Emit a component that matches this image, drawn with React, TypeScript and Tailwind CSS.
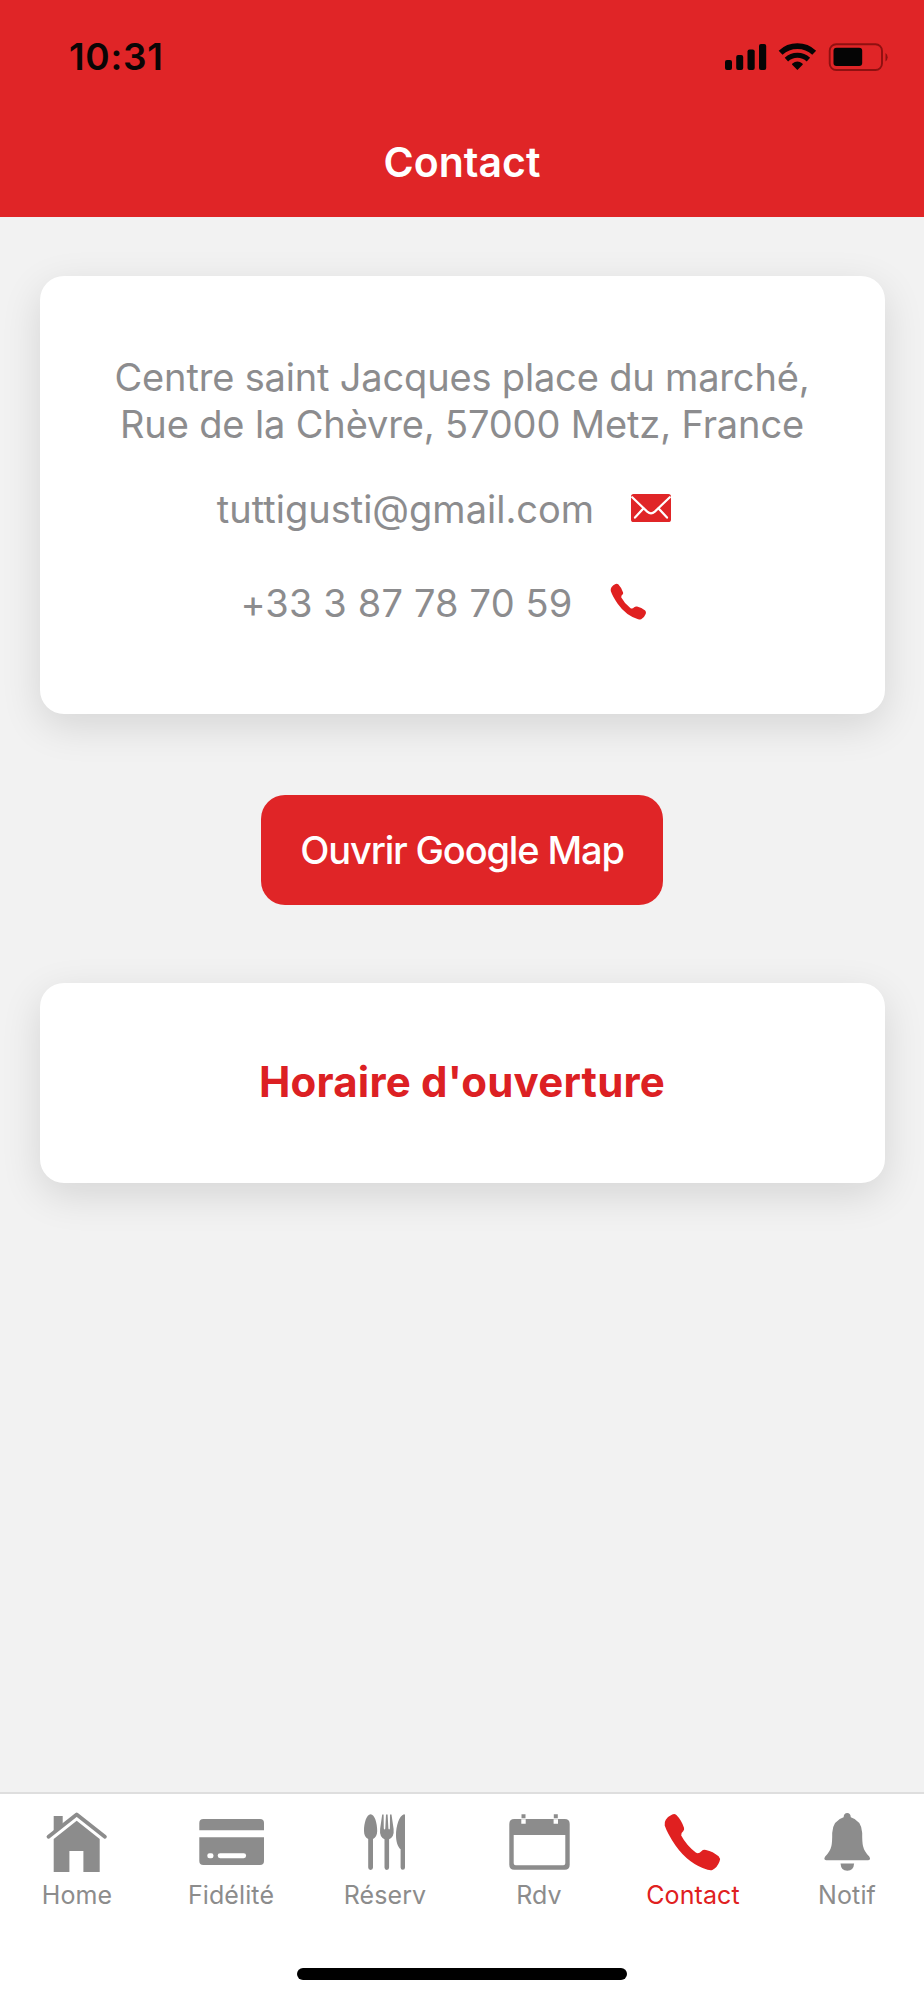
import type { ReactNode } from "react";

function StatusIcons() {
  return (
    <svg className="h-7 w-[164px]" viewBox="0 0 164 28" fill="none">
      <g fill="#050505">
        <rect x="0" y="17" width="7" height="10" rx="2" />
        <rect x="11.2" y="12" width="7" height="15" rx="2" />
        <rect x="22.5" y="6.5" width="7.2" height="20.5" rx="2" />
        <rect x="34" y="1" width="7.2" height="26" rx="2" />
        <path d="M72.4 27 L67.2 21.8 Q66.6 21 67.4 20.4 A8 8 0 0 1 77.4 20.4 Q78.2 21 77.6 21.8 Z" />
        <rect x="108.5" y="4.8" width="28.7" height="18.2" rx="3" />
      </g>
      <path d="M61.4 16.6 A16.2 16.2 0 0 1 83.4 16.6" stroke="#050505" strokeWidth="5" />
      <path d="M55.6 9.8 A24.5 24.5 0 0 1 89.2 9.8" stroke="#050505" strokeWidth="5.6" />
      <rect x="104.7" y="1.2" width="52.3" height="25.8" rx="6.5" stroke="#8f1010" strokeWidth="1.9" />
      <path d="M160.5 10 A5.2 5.2 0 0 1 160.5 18.4 Z" fill="#8f1010" />
    </svg>
  );
}

function PhoneIcon({ className }: { className: string }) {
  return (
    <svg className={className} viewBox="7 7 57 58" fill="currentColor">
      <path d="M15.2 8.6 Q17.4 7.4 19.4 9 Q24.5 14.2 27 21.8 Q27.6 23.6 26.2 25.2 Q23.6 27 24.2 29.6 Q29.5 39.5 38.8 46.6 Q41.6 48.2 44.4 45.2 Q46.3 43.2 49 43.9 Q56 45.4 61.6 50.3 Q63.6 52.4 62.6 55.2 Q60.2 61.6 55.4 64 Q53.6 64.6 50.6 63.8 Q31.5 58 18.5 39.5 Q10.3 27.2 7.7 19.4 Q7.1 16.4 8.8 13.8 Q11.4 10.2 15.2 8.6 Z" />
    </svg>
  );
}

function MailIcon() {
  return (
    <svg className="h-7 w-10" viewBox="0 0 40 28">
      <rect x="0" y="0" width="40" height="28" rx="2.6" fill="currentColor" />
      <g fill="none" stroke="#fff" strokeWidth="2.2" strokeLinecap="round">
        <path d="M1.2 3.2 L16.2 17.6 Q20 21 23.8 17.6 L38.8 3.2" />
        <path d="M12.4 14.4 L4 23.6 M27.6 14.4 L36 23.6" />
      </g>
    </svg>
  );
}

function TabSvg({ children }: { children: ReactNode }) {
  return (
    <svg className="size-[72px]" viewBox="0 0 72 72" fill="currentColor">
      {children}
    </svg>
  );
}

const tabs = [
  {
    label: "Home",
    icon: (
      <TabSvg>
        <path d="M7.5 30.7 L35.7 8.4 L63.9 30.7" fill="none" stroke="currentColor" strokeWidth="3.8" strokeLinecap="round" strokeLinejoin="round" />
        <path d="M12.7 10 H21.7 V20 L12.7 27 Z" />
        <path d="M12.7 33 L35.7 14.7 L58.7 33 V66 H42.4 V45 H28.4 V66 H12.7 Z" />
      </TabSvg>
    ),
  },
  {
    label: "Fidélité",
    icon: (
      <TabSvg>
        <path d="M4.3 24.3 V17 Q4.3 13 8.3 13 H65 Q69 13 69 17 V24.3 Z" />
        <path d="M4.3 31.3 H69 V55 Q69 59 65 59 H8.3 Q4.3 59 4.3 55 Z" />
        <rect x="12.3" y="47.2" width="6.2" height="5" rx="2.2" fill="#fff" />
        <rect x="22.7" y="47.2" width="28.4" height="5" rx="2.4" fill="#fff" />
      </TabSvg>
    ),
  },
  {
    label: "Réserv",
    icon: (
      <TabSvg>
        <path d="M21.6 8.3 C25.6 8.3 28.2 17 28.2 25 C28.2 29 26.6 31.6 24 33 V61.6 A2.4 2.4 0 0 1 19.2 61.6 V33 C16.5 31.6 15 29 15 25 C15 17 17.6 8.3 21.6 8.3 Z" />
        <path d="M33.2 8.4 H34.6 L34.8 22.4 Q35.5 24.4 36.3 22.4 L37 8.4 H38.6 L39.4 22.4 Q40.1 24.4 40.9 22.4 L41 8.4 H42.5 L44.6 23 Q45.4 31 40.1 33.2 V61.6 A2.3 2.3 0 0 1 35.5 61.6 V33.2 Q30.3 31 31.1 23 Z" />
        <path d="M56 9.3 V61.6 A2.2 2.2 0 0 1 51.6 61.6 V43.3 C48.5 40.5 47 35 47 29.5 C47 20 50.2 9.8 55 8.3 Q56 8.2 56 9.3 Z" />
      </TabSvg>
    ),
  },
  {
    label: "Rdv",
    icon: (
      <TabSvg>
        <path fillRule="evenodd" d="M11.3 13 H61.7 Q66.7 13 66.7 18 V58.7 Q66.7 63.7 61.7 63.7 H11.3 Q6.3 63.7 6.3 58.7 V18 Q6.3 13 11.3 13 Z M10.7 29 V57.3 Q10.7 59.3 12.7 59.3 H60.3 Q62.3 59.3 62.3 57.3 V29 Z" />
        <path d="M18.5 8.3 H22.5 V12.2 H18.5 Z M50.8 8.3 H54.8 V12.2 H50.8 Z" />
        <path fill="#fff" d="M18.3 13.2 H22.7 V17.7 H18.3 Z M50.6 13.2 H55 V17.7 H50.6 Z" />
      </TabSvg>
    ),
  },
  {
    label: "Contact",
    active: true,
    icon: (
      <span className="flex size-[72px] items-center justify-center pr-[2px]">
        <PhoneIcon className="h-[58px] w-[57px]" />
      </span>
    ),
  },
  {
    label: "Notif",
    icon: (
      <TabSvg>
        <path d="M36.2 7 Q39.4 7 39.8 11.2 Q50.8 14.5 51.2 27 Q51.1 36 52 40 Q53.2 45.5 58.2 50.5 Q59.6 52.4 58.8 53.6 Q58.2 54.3 57 54.3 H15.4 Q14.2 54.3 13.6 53.6 Q12.8 52.4 14.2 50.5 Q19.2 45.5 20.4 40 Q21.3 36 21.2 27 Q21.6 14.5 32.6 11.2 Q33 7 36.2 7 Z" />
        <path d="M29.5 57.5 H43.1 Q42.6 64.8 36.3 64.8 Q30 64.8 29.5 57.5 Z" />
      </TabSvg>
    ),
  },
];

export default function App() {
  return (
    <div className="flex h-[2000px] w-[924px] flex-col overflow-hidden bg-[#f2f2f2] font-['Inter',sans-serif] whitespace-nowrap">
      <header className="flex h-[217px] shrink-0 flex-col bg-[#e02527]">
        <div className="flex h-[114px] items-center justify-between pr-[35px] pl-[69px]">
          <time className="text-[37px] font-semibold tracking-[0.7px] text-[#0a0505]">10:31</time>
          <StatusIcons />
        </div>
        <h1 className="flex flex-1 items-center justify-center pb-[5px] text-[41px] font-semibold text-white">Contact</h1>
      </header>

      <main className="flex flex-1 flex-col items-center pt-[59px]">
        <section className="flex h-[438px] w-[845px] flex-col items-center rounded-[24px] bg-white pt-[78px] text-[38px] leading-[47px] text-[#8c8c8e] shadow-[0_12px_40px_rgba(0,0,0,0.12)]">
          <p className="text-center">
            <span className="tracking-[-0.17px]">Centre saint Jacques place du marché,</span>
            <br />
            <span className="tracking-[-0.14px]">Rue de la Chèvre, 57000 Metz, France</span>
          </p>
          <div className="mt-[38px] flex items-center gap-[37px] pr-[36px]">
            <span>tuttigusti@gmail.com</span>
            <span className="pb-1 text-[#e02527]"><MailIcon /></span>
          </div>
          <div className="mt-[47px] flex items-center gap-[37px] pr-[37px]">
            <span className="tracking-[0.15px]">+33 3 87 78 70 59</span>
            <span className="pb-1 text-[#e02020]"><PhoneIcon className="h-[37px] w-[37px]" /></span>
          </div>
        </section>

        <button className="mt-[81px] h-[110px] w-[402px] rounded-[24px] bg-[#e02527] text-[38px] font-medium tracking-[-1.15px] text-white">
          Ouvrir Google Map
        </button>

        <section className="mt-[78px] flex h-[200px] w-[845px] items-center justify-center rounded-[24px] bg-white pb-[3px] shadow-[0_12px_40px_rgba(0,0,0,0.12)]">
          <h2 className="text-[42px] font-bold tracking-[0.2px] text-[#dc2023]">Horaire d'ouverture</h2>
        </section>
      </main>

      <footer className="flex h-[208px] shrink-0 flex-col items-center border-t-2 border-[#dedede] bg-white">
        <nav className="grid w-full grid-cols-6 pt-3">
          {tabs.map((tab) => (
            <a key={tab.label} className={tab.active ? "flex flex-col items-center text-[#e02020]" : "flex flex-col items-center text-[#8c8c8c]"}>
              {tab.icon}
              <span className="mt-px text-[25px] leading-8 tracking-[0.1px]">{tab.label}</span>
            </a>
          ))}
        </nav>
        <div className="mt-[57px] h-3 w-[330px] rounded-full bg-black" />
      </footer>
    </div>
  );
}
